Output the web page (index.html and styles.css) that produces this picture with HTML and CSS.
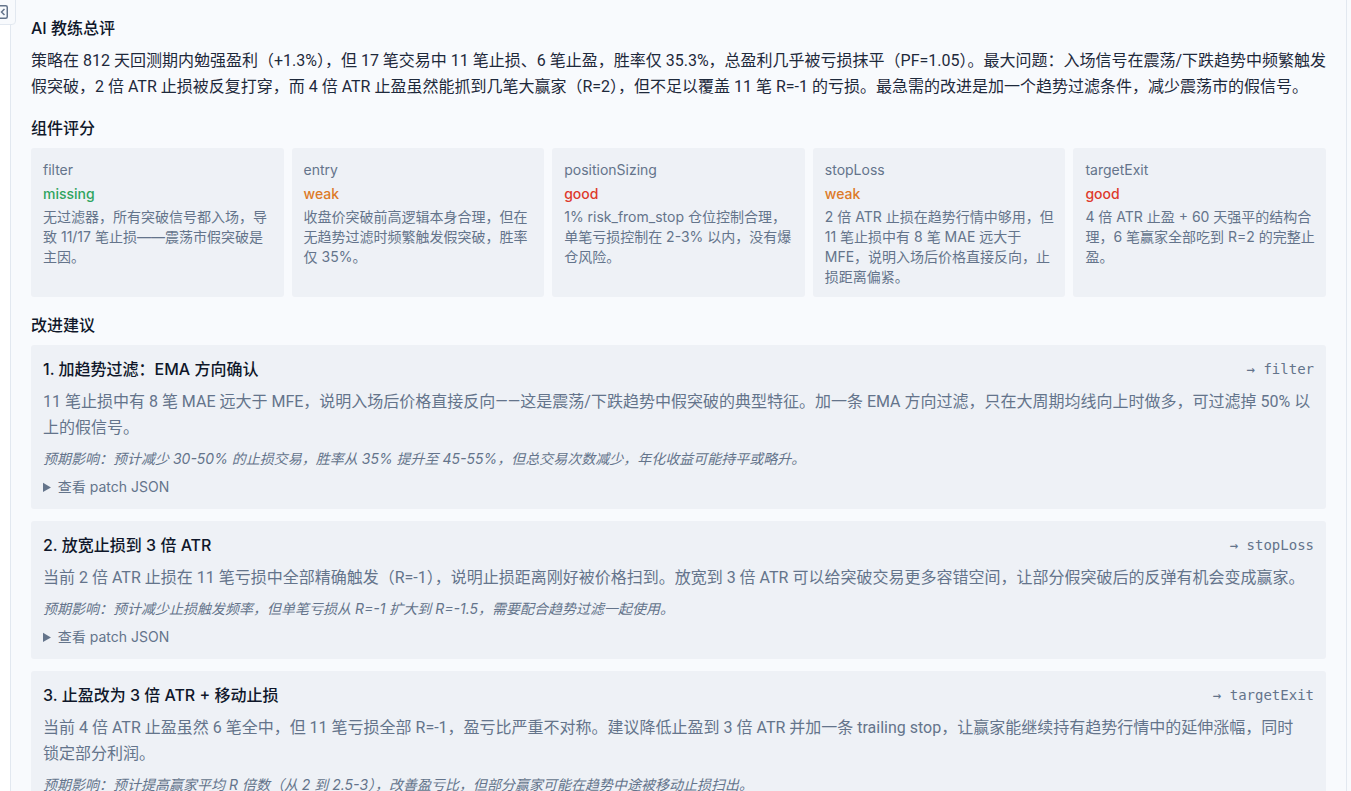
FILE: index.html
```html
<!DOCTYPE html>
<html lang="zh-CN">
<head>
  <meta charset="UTF-8" />
  <meta name="viewport" content="width=device-width, initial-scale=1.0"/>
  <title>AI 教练总评</title>
  <link rel="stylesheet" href="styles.css">
</head>
<body>
  <button type="button" class="collapse-btn" aria-label="收起侧栏">
    <svg width="16" height="16" viewBox="0 0 16 16" fill="none" stroke="currentColor" stroke-width="1.5">
      <rect x="1.75" y="1.75" width="12.5" height="12.5" rx="1.5"/>
      <path d="M11.5 5 8.5 8 11.5 11"/>
    </svg>
  </button>

  <main class="panel">
    <section>
      <h3>AI 教练总评</h3>
      <p class="summary-text">策略在 812 天回测期内勉强盈利（+1.3%），但 17 笔交易中 11 笔止损、6 笔止盈，胜率仅 35.3%，总盈利几乎被亏损抹平（PF=1.05）。最大问题：入场信号在震荡/下跌趋势中频繁触发假突破，2 倍 ATR 止损被反复打穿，而 4 倍 ATR 止盈虽然能抓到几笔大赢家（R=2），但不足以覆盖 11 笔 R=-1 的亏损。最急需的改进是加一个趋势过滤条件，减少震荡市的假信号。</p>
    </section>

    <section>
      <h3>组件评分</h3>
      <div class="scores">
        <div class="score">
          <div class="name">filter</div>
          <div class="rating missing">missing</div>
          <p>无过滤器，所有突破信号都入场，导致 11/17 笔止损——震荡市假突破是主因。</p>
        </div>
        <div class="score">
          <div class="name">entry</div>
          <div class="rating weak">weak</div>
          <p>收盘价突破前高逻辑本身合理，但在无趋势过滤时频繁触发假突破，胜率仅 35%。</p>
        </div>
        <div class="score">
          <div class="name">positionSizing</div>
          <div class="rating good">good</div>
          <p>1% risk_from_stop 仓位控制合理，单笔亏损控制在 2-3% 以内，没有爆仓风险。</p>
        </div>
        <div class="score">
          <div class="name">stopLoss</div>
          <div class="rating weak">weak</div>
          <p>2 倍 ATR 止损在趋势行情中够用，但 11 笔止损中有 8 笔 MAE 远大于 MFE，说明入场后价格直接反向，止损距离偏紧。</p>
        </div>
        <div class="score">
          <div class="name">targetExit</div>
          <div class="rating good">good</div>
          <p>4 倍 ATR 止盈 + 60 天强平的结构合理，6 笔赢家全部吃到 R=2 的完整止盈。</p>
        </div>
      </div>
    </section>

    <section>
      <h3>改进建议</h3>
      <div class="suggestions">
        <article class="suggestion">
          <header>
            <h4>1. 加趋势过滤：EMA 方向确认</h4>
            <code>→ filter</code>
          </header>
          <p class="reason">11 笔止损中有 8 笔 MAE 远大于 MFE，说明入场后价格直接反向——这是震荡/下跌趋势中假突破的典型特征。加一条 EMA 方向过滤，只在大周期均线向上时做多，可过滤掉 50% 以上的假信号。</p>
          <p class="impact">预期影响：预计减少 30-50% 的止损交易，胜率从 35% 提升至 45-55%，但总交易次数减少，年化收益可能持平或略升。</p>
          <details>
            <summary>查看 patch JSON</summary>
          </details>
        </article>

        <article class="suggestion">
          <header>
            <h4>2. 放宽止损到 3 倍 ATR</h4>
            <code>→ stopLoss</code>
          </header>
          <p class="reason">当前 2 倍 ATR 止损在 11 笔亏损中全部精确触发（R=-1），说明止损距离刚好被价格扫到。放宽到 3 倍 ATR 可以给突破交易更多容错空间，让部分假突破后的反弹有机会变成赢家。</p>
          <p class="impact">预期影响：预计减少止损触发频率，但单笔亏损从 R=-1 扩大到 R=-1.5，需要配合趋势过滤一起使用。</p>
          <details>
            <summary>查看 patch JSON</summary>
          </details>
        </article>

        <article class="suggestion">
          <header>
            <h4>3. 止盈改为 3 倍 ATR + 移动止损</h4>
            <code>→ targetExit</code>
          </header>
          <p class="reason">当前 4 倍 ATR 止盈虽然 6 笔全中，但 11 笔亏损全部 R=-1，盈亏比严重不对称。建议降低止盈到 3 倍 ATR 并加一条 trailing stop，让赢家能继续持有趋势行情中的延伸涨幅，同时<br>锁定部分利润。</p>
          <p class="impact">预期影响：预计提高赢家平均 R 倍数（从 2 到 2.5-3），改善盈亏比，但部分赢家可能在趋势中途被移动止损扫出。</p>
          <details>
            <summary>查看 patch JSON</summary>
          </details>
        </article>
      </div>
    </section>
  </main>
</body>
</html>
```
FILE: styles.css
```css
* {
  box-sizing: border-box;
}
body {
  margin: 0;
  height: 100vh;
  padding: 0 4px 0 10px;
  overflow: hidden;
  background: linear-gradient(to right, #ffffff 10px, #f8fafd 10px);
  color: #0f172a;
  font-family: Inter, "Noto Sans CJK SC", sans-serif;
  font-size: 16px;
}
h3, h4, p {
  margin: 0;
}
h3, h4 {
  font-size: 16px;
  font-weight: 500;
  line-height: 24px;
}
.panel {
  height: 100%;
  padding: 16px 20px;
  overflow-y: auto;
  scrollbar-width: none;
  background: #f8fafd;
  border-left: 1px solid #e2e8f0;
  border-right: 1px solid #e2e8f0;
}
section + section {
  margin-top: 16px;
}
h3 {
  margin-bottom: 8px;
}

/* sidebar toggle, hangs over the panel's left edge */
.collapse-btn {
  position: absolute;
  top: -1px;
  left: -9px;
  width: 25px;
  height: 26px;
  padding: 0;
  background: #f8fafd;
  color: #64748b;
  border: 1px solid #e2e8f0;
  border-radius: 0 0 4px 0;
  cursor: pointer;
}
.collapse-btn svg {
  display: block;
  margin-left: 1px;
}

.summary-text, .reason {
  font-family: Roboto, "Noto Sans CJK SC", sans-serif;
  line-height: 26px;
}
.summary-text {
  margin-right: -4px;
  color: #1e293b;
}

.scores {
  display: grid;
  grid-template-columns: repeat(5, 1fr);
  gap: 8px;
}
.score {
  padding: 12px 8px 10px 12px;
  background: #eef1f6;
  border-radius: 3px;
  color: #64748b;
  font-size: 14px;
  line-height: 20px;
}
.rating {
  margin: 4px 0 3px;
  font-weight: 500;
}
.missing {
  color: #30a45f;
}
.weak {
  color: #dd7a28;
}
.good {
  color: #de3a2c;
}

.suggestions {
  display: grid;
  gap: 12px;
}
.suggestion {
  display: grid;
  gap: 8px;
  padding: 12px;
  background: #eef1f6;
  border-radius: 3px;
  color: #64748b;
}
.suggestion header {
  display: flex;
  justify-content: space-between;
  align-items: center;
}
.suggestion h4 {
  color: #0f172a;
}
.suggestion code {
  font-family: "DejaVu Sans Mono", monospace;
  font-size: 14px;
  line-height: 20px;
}
.impact, details {
  font-size: 14px;
  line-height: 20px;
}
.impact {
  font-style: italic;
}
summary {
  cursor: pointer;
}
```
